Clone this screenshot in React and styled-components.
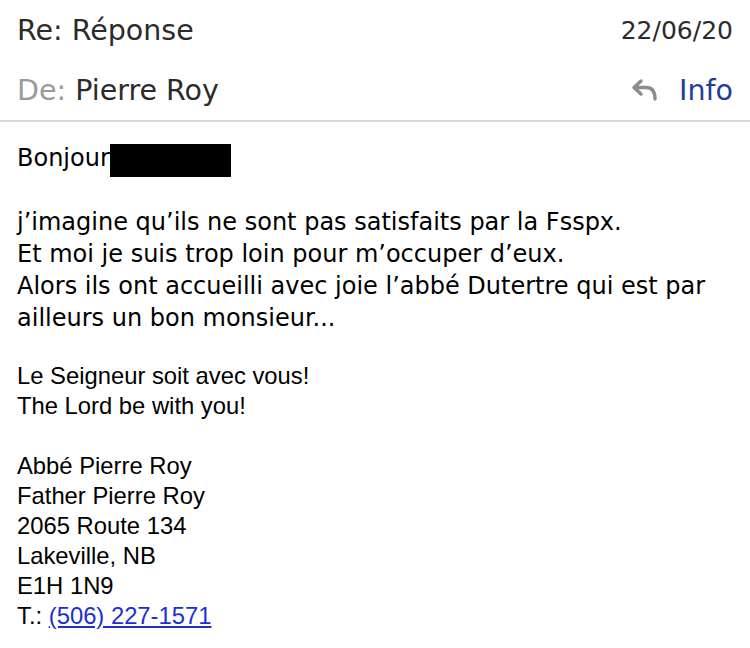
import React from "react";
import styled, { createGlobalStyle } from "styled-components";

const Global = createGlobalStyle`
  html, body {
    margin: 0;
    padding: 0;
    background: #ffffff;
  }
`;

const Page = styled.div`
  width: 750px;
  height: 648px;
  overflow: hidden;
  background: #fff;
`;

const Header = styled.div`
  padding: 0 17px 0 17px;
  border-bottom: 2px solid #d8d8d8;
  font-family: "DejaVu Sans", Verdana, sans-serif;
`;

const HeaderRow = styled.div`
  display: flex;
  justify-content: space-between;
  align-items: center;
  height: ${(p) => p.$h}px;
`;

const Subject = styled.div`
  font-size: 28.5px;
  color: #2b2b2b;
`;

const DateText = styled.div`
  font-size: 25px;
  color: #2b2b2b;
`;

const Label = styled.span`
  color: #9a9a9a;
`;

const Actions = styled.div`
  display: flex;
  align-items: center;
  gap: 20px;
`;

const InfoLink = styled.span`
  font-size: 28.5px;
  color: #1f3d99;
`;

const Body = styled.div`
  padding: 19px 17px 0 17px;
  font-family: "DejaVu Sans", Verdana, sans-serif;
  font-size: 24px;
  line-height: 32px;
  color: #000;
`;

const Para = styled.p`
  margin: 0 0 32px 0;
`;

const Redact = styled.span`
  display: inline-block;
  width: 121px;
  height: 33px;
  background: #000;
  vertical-align: -8px;
  transform: translateY(3px);
`;

const Signature = styled.div`
  font-family: "Liberation Sans", Arial, sans-serif;
  font-size: 23.8px;
  line-height: 30px;
  margin-top: -5px;
`;

const SigPara = styled.p`
  margin: 0 0 30px 0;
`;

const Phone = styled.a`
  color: #1a2fd6;
  text-decoration: underline;
`;

function ReplyIcon() {
  return (
    <svg width="28" height="24" viewBox="0 0 28 24" fill="none">
      <path
        d="M10 3 L3 9.5 L10 16"
        stroke="#8c8c8c"
        strokeWidth="3.4"
        strokeLinecap="round"
        strokeLinejoin="round"
      />
      <path
        d="M4 9.5 H15 C21 9.5 24 13 24 21"
        stroke="#8c8c8c"
        strokeWidth="3.4"
        strokeLinecap="round"
      />
    </svg>
  );
}

export default function App() {
  return (
    <Page>
      <Global />
      <Header>
        <HeaderRow $h={60}>
          <Subject>Re: Réponse</Subject>
          <DateText>22/06/20</DateText>
        </HeaderRow>
        <HeaderRow $h={60}>
          <Subject>
            <Label>De:</Label> Pierre Roy
          </Subject>
          <Actions>
            <ReplyIcon />
            <InfoLink>Info</InfoLink>
          </Actions>
        </HeaderRow>
      </Header>
      <Body>
        <Para>
          Bonjour<Redact />
        </Para>
        <Para>
          j’imagine qu’ils ne sont pas satisfaits par la Fsspx.
          <br />
          Et moi je suis trop loin pour m’occuper d’eux.
          <br />
          Alors ils ont accueilli avec joie l’abbé Dutertre qui est par
          ailleurs un bon monsieur...
        </Para>
        <Signature>
          <SigPara>
            Le Seigneur soit avec vous!
            <br />
            The Lord be with you!
          </SigPara>
          <SigPara>
            Abbé Pierre Roy
            <br />
            Father Pierre Roy
            <br />
            2065 Route 134
            <br />
            Lakeville, NB
            <br />
            E1H 1N9
            <br />
            T.: <Phone href="#">(506) 227-1571</Phone>
          </SigPara>
        </Signature>
      </Body>
    </Page>
  );
}
